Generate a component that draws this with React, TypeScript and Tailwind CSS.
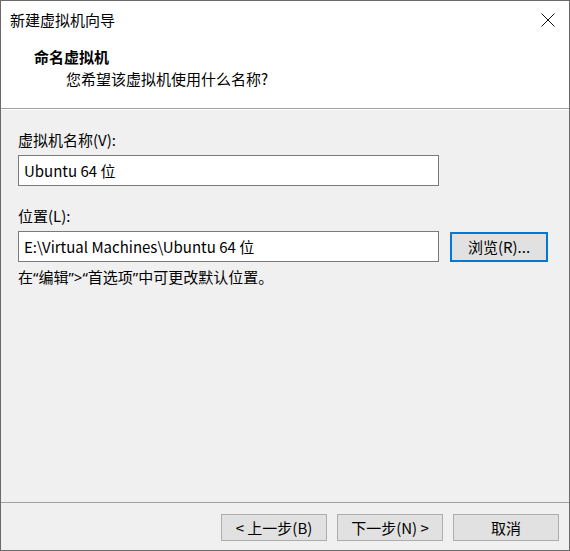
const font = { fontFamily: '"Noto Sans CJK SC", "Noto Sans", sans-serif' };
const latin = { fontFamily: '"Noto Sans", "Liberation Sans", sans-serif' };

function WinButton({ label, focused = false }: { label: string; focused?: boolean }) {
    return (
        <div
            className={
                focused
                    ? 'flex h-[30px] w-[98px] items-center justify-center border-2 border-[#0078d7] bg-[#e1e1e1] text-[15px] text-black'
                    : 'flex h-[27px] w-[106px] items-center justify-center border border-[#adadad] bg-[#e1e1e1] text-[15px] text-black'
            }
        >
            {label}
        </div>
    );
}

function TextBox({ value }: { value: string }) {
    return (
        <div className="flex h-[31px] w-[421px] items-center border border-[#7a7a7a] bg-white pl-[5px] text-[15px] text-black">
            {value}
        </div>
    );
}

export default function App() {
    return (
        <div className="flex h-[551px] w-[570px] flex-col border border-[#6a6a6a] bg-[#f0f0f0] leading-5" style={font}>
            {/* title bar */}
            <div className="flex h-[37px] shrink-0 items-center justify-between bg-white pr-[14px] pl-[9px]">
                <span className="text-[15px] text-black">新建虚拟机向导</span>
                <svg width="14" height="14" viewBox="0 0 14 14" className="mt-[1px]">
                    <path d="M0.5 0.5 L13.5 13.5 M13.5 0.5 L0.5 13.5" stroke="#111" strokeWidth="1" />
                </svg>
            </div>

            {/* header */}
            <div className="flex h-[70px] shrink-0 flex-col bg-white pt-[9px]">
                <span className="pl-[33px] text-[15px] font-bold text-black">命名虚拟机</span>
                <span className="mt-[2px] pl-[65px] text-[15px] text-black">您希望该虚拟机使用什么名称?</span>
            </div>
            <div className="h-px shrink-0 bg-[#a0a0a0]" />
            <div className="h-px shrink-0 bg-white" />

            {/* body */}
            <div className="flex flex-1 flex-col px-[17px] pt-[20px]">
                <span className="text-[15px] text-black">虚拟机名称(V):</span>
                <div className="mt-[5px]">
                    <TextBox value="Ubuntu 64 位" />
                </div>
                <span className="mt-[20px] text-[15px] text-black">位置(L):</span>
                <div className="mt-[5px] flex items-center gap-[11px]">
                    <TextBox value="E:\Virtual Machines\Ubuntu 64 位" />
                    <WinButton label="浏览(R)..." focused />
                </div>
                <span className="mt-[5px] text-[15px] text-black">
                    在<span style={latin}>“</span>编辑<span style={latin}>”&gt;“</span>首选项<span style={latin}>”</span>中可更改默认位置。
                </span>
            </div>

            {/* footer */}
            <div className="h-px shrink-0 bg-[#a0a0a0]" />
            <div className="flex h-[47px] shrink-0 items-start justify-end gap-[10px] pt-[11px] pr-[10px]">
                <WinButton label="< 上一步(B)" />
                <WinButton label="下一步(N) >" />
                <WinButton label="取消" />
            </div>
        </div>
    );
}
